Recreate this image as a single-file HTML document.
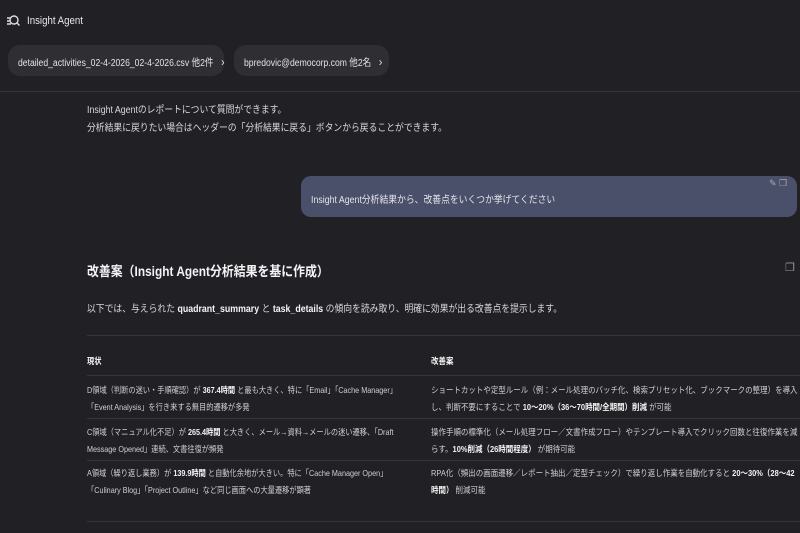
<!DOCTYPE html><html><head><meta charset="utf-8"><style>
*{margin:0;padding:0;box-sizing:border-box}
body{width:800px;height:533px;overflow:hidden;background:#212125;color:#d4d4d8;font-family:"Liberation Sans","Noto Sans CJK JP",sans-serif;position:relative}
.a{position:absolute;white-space:nowrap;transform-origin:0 0}
.s{transform:scaleX(.88)}
.chip{position:absolute;top:45px;height:31px;background:#2e2e33;border-radius:12px}
.ct{position:absolute;top:54px;font-size:10px;color:#e4e4e7;white-space:nowrap;transform:scaleX(.86);transform-origin:0 0}
.t{font-size:8.5px;line-height:17px;color:#cfcfd4}
.L{transform:scaleX(.85)}
.R{transform:scaleX(.88)}
b{color:#f4f4f5}
.ln{position:absolute;left:87px;width:713px;height:1px;background:#35353a}
</style></head><body>
<svg class="a" style="left:6px;top:14px" width="14" height="14" viewBox="0 0 14 14" fill="none" stroke="#ddd" stroke-width="1.4"><circle cx="8" cy="6" r="4"/><path d="M11 9l2.5 2.5M1 4h3M1 7h2.5M1 10h4"/></svg>
<div class="a s" style="left:27px;top:15px;font-size:11px;color:#e8e8ea">Insight Agent</div>
<div class="chip" style="left:8px;width:216px"></div>
<div class="ct" style="left:18px">detailed_activities_02-4-2026_02-4-2026.csv 他2件 <span style="margin-left:6px;font-size:12px">›</span></div>
<div class="chip" style="left:234px;width:155px"></div>
<div class="ct" style="left:244px">bpredovic@democorp.com 他2名 <span style="margin-left:6px;font-size:12px">›</span></div>
<div class="a" style="left:0;top:91px;width:800px;height:1px;background:#35353a"></div>
<div class="a s" style="left:87px;top:102px;font-size:10px;line-height:18px;color:#d8d8dc">Insight Agentのレポートについて質問ができます。<br>分析結果に戻りたい場合はヘッダーの「分析結果に戻る」ボタンから戻ることができます。</div>
<div class="a" style="left:301px;top:176px;width:496px;height:41px;background:#4b506a;border-radius:10px"></div>
<div class="a s" style="left:311px;top:191px;font-size:10px;color:#e4e4ea">Insight Agent分析結果から、改善点をいくつか挙げてください</div>
<div class="a" style="left:769px;top:178px;font-size:9px;color:#aaa">✎ ❐</div>
<div class="a s" style="left:87px;top:260px;font-size:13.5px;font-weight:bold;color:#f4f4f5">改善案（Insight Agent分析結果を基に作成）</div>
<div class="a" style="left:785px;top:261px;font-size:11px;color:#999">❐</div>
<div class="a s" style="left:87px;top:300px;font-size:10px;color:#d8d8dc">以下では、与えられた <b>quadrant_summary</b> と <b>task_details</b> の傾向を読み取り、明確に効果が出る改善点を提示します。</div>
<div class="ln" style="top:335px"></div>
<div class="a t L" style="left:87px;top:353px"><b>現状</b></div>
<div class="a t R" style="left:431px;top:353px"><b>改善案</b></div>
<div class="ln" style="top:375px"></div>
<div class="a t L" style="left:87px;top:382px">D領域（判断の迷い・手順確認）が <b>367.4時間</b> と最も大きく、特に「Email」「Cache Manager」<br>「Event Analysis」を行き来する無目的遷移が多発</div>
<div class="a t R" style="left:431px;top:382px">ショートカットや定型ルール（例：メール処理のバッチ化、検索プリセット化、ブックマークの整理）を導入<br>し、判断不要にすることで <b>10〜20%（36〜70時間/全期間）削減</b> が可能</div>
<div class="ln" style="top:418px"></div>
<div class="a t L" style="left:87px;top:424px">C領域（マニュアル化不足）が <b>265.4時間</b> と大きく、メール→資料→メールの迷い遷移、「Draft<br>Message Opened」連続、文書往復が頻発</div>
<div class="a t R" style="left:431px;top:424px">操作手順の標準化（メール処理フロー／文書作成フロー）やテンプレート導入でクリック回数と往復作業を減<br>らす。<b>10%削減（26時間程度）</b> が期待可能</div>
<div class="ln" style="top:460px"></div>
<div class="a t L" style="left:87px;top:465px">A領域（繰り返し業務）が <b>139.9時間</b> と自動化余地が大きい。特に「Cache Manager Open」<br>「Culinary Blog」「Project Outline」など同じ画面への大量遷移が顕著</div>
<div class="a t R" style="left:431px;top:465px">RPA化（頻出の画面遷移／レポート抽出／定型チェック）で繰り返し作業を自動化すると <b>20〜30%（28〜42<br>時間）</b> 削減可能</div>
<div class="ln" style="top:521px"></div>
</body></html>
